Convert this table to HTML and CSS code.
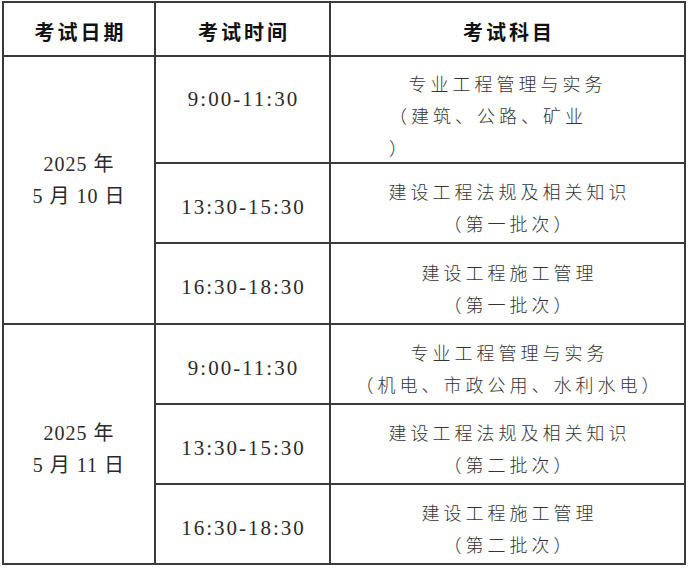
FILE: index.html
```html
<!DOCTYPE html>
<html lang="zh-CN">
<head>
<meta charset="utf-8">
<title>考试安排</title>
<link rel="stylesheet" href="styles.css">
</head>
<body>
<div class="sched">
  <div class="cell head">考试日期</div>
  <div class="cell head">考试时间</div>
  <div class="cell head">考试科目</div>

  <div class="cell date d1"><div>2025 年</div><div>5 月 10 日</div></div>
  <div class="cell time t-first">9:00-11:30</div>
  <div class="cell subj s-first">
    <div class="line">专业工程管理与实务</div>
    <div class="wrap">
      <div class="line">（建筑、公路、矿业</div>
      <div class="line">）</div>
    </div>
  </div>
  <div class="cell time">13:30-15:30</div>
  <div class="cell subj"><div class="line">建设工程法规及相关知识</div><div class="line">（第一批次）</div></div>
  <div class="cell time">16:30-18:30</div>
  <div class="cell subj"><div class="line">建设工程施工管理</div><div class="line">（第一批次）</div></div>

  <div class="cell date d2"><div>2025 年</div><div>5 月 11 日</div></div>
  <div class="cell time">9:00-11:30</div>
  <div class="cell subj"><div class="line">专业工程管理与实务</div><div class="line">（机电、市政公用、水利水电）</div></div>
  <div class="cell time">13:30-15:30</div>
  <div class="cell subj"><div class="line">建设工程法规及相关知识</div><div class="line">（第二批次）</div></div>
  <div class="cell time">16:30-18:30</div>
  <div class="cell subj"><div class="line">建设工程施工管理</div><div class="line">（第二批次）</div></div>
</div>
</body>
</html>
```

FILE: styles.css
```css
html, body {
  margin: 0;
  padding: 0;
  background: #ffffff;
}

body {
  font-family: "Liberation Serif", "Noto Sans CJK SC", serif;
  color: #2a2a2a;
}

.sched {
  box-sizing: border-box;
  margin: 1px 0 0 2px;
  width: 684px;
  display: grid;
  grid-template-columns: 152px 175px 355px;
  grid-template-rows: 54px 107px 80px 81px 80px 80px 80px;
  border-left: 2px solid #3a3a3a;
  border-top: 2px solid #3a3a3a;
}

.cell {
  box-sizing: border-box;
  border-right: 2px solid #3a3a3a;
  border-bottom: 2px solid #3a3a3a;
  display: flex;
  flex-direction: column;
  align-items: center;
  justify-content: center;
  text-align: center;
}

.head {
  font-family: "Noto Sans CJK SC", sans-serif;
  font-weight: 700;
  font-size: 20px;
  letter-spacing: 3px;
  padding-left: 3px;
  padding-top: 4px;
  color: #111;
}

.date {
  grid-row: span 3;
  font-size: 20px;
  line-height: 32px;
  letter-spacing: 1px;
}
.date.d1 { padding-bottom: 20px; }
.date.d2 { padding-top: 9px; }

.time {
  font-family: "Liberation Serif", serif;
  font-size: 21px;
  letter-spacing: 2px;
  padding-left: 2px;
  padding-top: 8px;
}
.time.t-first {
  padding-top: 0;
  padding-bottom: 20px;
}

.subj {
  font-family: "Noto Sans CJK SC", sans-serif;
  font-weight: 300;
  font-size: 18px;
  line-height: 32px;
  letter-spacing: 4px;
  padding-left: 4px;
  padding-top: 8px;
  color: #333;
}
.subj.s-first {
  padding-top: 10px;
  padding-left: 0;
}
.subj .wrap {
  align-self: stretch;
  text-align: left;
  padding-left: 58px;
}
```
